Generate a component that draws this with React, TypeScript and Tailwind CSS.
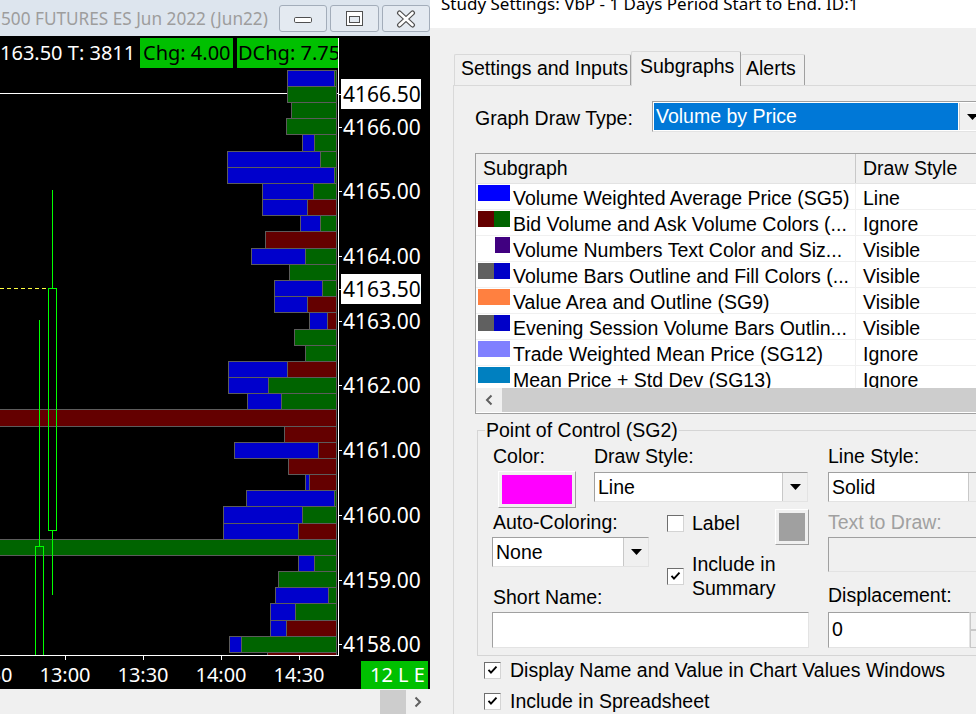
import React from 'react';

const B = '#0000cc', G = '#006400', R = '#640000';
type Seg = [number, number, string];
const rows: Seg[][] = [
  [[287, 334, B], [334, 336, G]],
  [[287, 336, G]],
  [[291, 336, G]],
  [[286, 336, G]],
  [[302, 314, B], [314, 336, G]],
  [[227, 320, B], [320, 336, G]],
  [[227, 334, B], [334, 336, G]],
  [[262, 313, B], [313, 336, G]],
  [[262, 307, B], [307, 336, R]],
  [[300, 320, B], [320, 336, G]],
  [[265, 336, R]],
  [[251, 305, B], [305, 336, G]],
  [[289, 336, G]],
  [[274, 322, B], [322, 336, G]],
  [[274, 307, B], [307, 336, R]],
  [[309, 327, B], [327, 336, R]],
  [[294, 336, G]],
  [[305, 336, G]],
  [[228, 287, B], [287, 336, R]],
  [[228, 268, B], [268, 336, G]],
  [[247, 281, B], [281, 336, G]],
  [[-2, 336, R]],
  [[284, 336, R]],
  [[234, 318, B], [318, 336, R]],
  [[288, 336, R]],
  [[305, 309, B], [309, 336, R]],
  [[246, 334, B], [334, 336, G]],
  [[223, 302, B], [302, 336, G]],
  [[223, 298, B], [298, 336, R]],
  [[-2, 336, G]],
  [[298, 314, B], [314, 336, G]],
  [[278, 336, G]],
  [[275, 328, B], [328, 336, G]],
  [[270, 295, B], [295, 336, G]],
  [[270, 286, B], [286, 336, R]],
  [[229, 241, B], [241, 336, G]],
  [[267, 336, R]],
];

const rowTop = (i: number) => Math.round(69.7 + i * 16.175);

const prices: [string, number, boolean][] = [
  ['4166.50', 94, true],
  ['4166.00', 127, false],
  ['4165.00', 191, false],
  ['4164.00', 256, false],
  ['4163.50', 289, true],
  ['4163.00', 321, false],
  ['4162.00', 385, false],
  ['4161.00', 450, false],
  ['4160.00', 515, false],
  ['4159.00', 580, false],
  ['4158.00', 644, false],
];

const times: [string, number][] = [
  ['12:30', -13],
  ['13:00', 65],
  ['13:30', 143],
  ['14:00', 221],
  ['14:30', 299],
];

function TitleBar() {
  return (
    <div className="h-[36px] bg-[#dde5ee] flex items-start shrink-0">
      <div className="w-[279px] pt-[8px] pl-[1px] text-[17.2px] leading-[22px] text-[#9d9d9d] whitespace-nowrap overflow-hidden">
        500 FUTURES ES Jun 2022 (Jun22)
      </div>
      <div className="flex gap-[3px] pt-[5px]">
        <div className="w-[48px] h-[27px] border border-[#a3adba] rounded-[3px] bg-[#e4eaf1] flex items-center justify-center">
          <svg width="20" height="8" viewBox="0 0 20 8" className="mt-[3px]">
            <rect x="1.5" y="1.5" width="17" height="5" rx="1.2" fill="#fff" stroke="#505050" strokeWidth="1" />
          </svg>
        </div>
        <div className="w-[49px] h-[27px] border border-[#a3adba] rounded-[3px] bg-[#e4eaf1] flex items-center justify-center">
          <svg width="18" height="16" viewBox="0 0 18 16">
            <rect x="0.5" y="0.5" width="16" height="14" fill="#fff" stroke="#505050" strokeWidth="1" />
            <rect x="3.5" y="5.5" width="10" height="6" fill="#e4eaf1" stroke="#505050" strokeWidth="1" />
          </svg>
        </div>
        <div className="w-[48px] h-[27px] border border-[#a3adba] rounded-[3px] bg-[#e4eaf1] flex items-center justify-center">
          <svg width="20" height="18" viewBox="0 0 20 18">
            <path d="M3.5 3 L16.5 15 M16.5 3 L3.5 15" stroke="#505050" strokeWidth="5" strokeLinecap="round" />
            <path d="M3.5 3 L16.5 15 M16.5 3 L3.5 15" stroke="#ffffff" strokeWidth="2.6" strokeLinecap="round" />
          </svg>
        </div>
      </div>
    </div>
  );
}

function Chart() {
  return (
    <svg width="430" height="621" viewBox="0 68 430 621" className="block bg-black shrink-0">
      <defs>
        <clipPath id="plot">
          <rect x="0" y="68" width="338" height="587" />
        </clipPath>
      </defs>
      <g clipPath="url(#plot)">
        <line x1="0" y1="93.5" x2="338" y2="93.5" stroke="#ffffff" strokeWidth="1" />
        <line x1="0" y1="288.5" x2="48" y2="288.5" stroke="#ffff40" strokeWidth="1" strokeDasharray="4 3" />
        {rows.map((segs, i) => {
          const t = rowTop(i);
          const h = rowTop(i + 1) - t;
          return segs.map(([a, b, c], j) => (
            <rect key={i + '-' + j} x={a + 0.5} y={t + 0.5} width={b - a} height={h} fill={c} stroke="#5c5c5c" strokeWidth="1" />
          ));
        })}
        <line x1="52.5" y1="190" x2="52.5" y2="288" stroke="#00ff00" strokeWidth="1" />
        <line x1="52.5" y1="530" x2="52.5" y2="595" stroke="#00ff00" strokeWidth="1" />
        <rect x="48.5" y="288.5" width="8" height="242" fill="none" stroke="#00ff00" strokeWidth="1" />
        <line x1="39.5" y1="320" x2="39.5" y2="546" stroke="#00ff00" strokeWidth="1" />
        <rect x="35.5" y="546.5" width="8" height="130" fill="none" stroke="#00ff00" strokeWidth="1" />
      </g>
      <line x1="338.5" y1="68" x2="338.5" y2="656" stroke="#ffffff" strokeWidth="1" />
      <line x1="0" y1="655.5" x2="339" y2="655.5" stroke="#ffffff" strokeWidth="1" />
      {prices.map(([, y]) => (
        <line key={'t' + y} x1="338" y1={y + 0.5} x2="342" y2={y + 0.5} stroke="#ffffff" strokeWidth="1" />
      ))}
      {times.map(([, x]) => (
        <line key={'tt' + x} x1={x + 0.5} y1="655" x2={x + 0.5} y2="660" stroke="#ffffff" strokeWidth="1" />
      ))}
      {prices.map(([p, y, boxed]) => (
        <g key={p}>
          {boxed && <rect x="341" y={y - 15} width="80" height="30" fill="#ffffff" />}
          <text x="343" y={y + 7.5} fontFamily="Noto Sans, sans-serif" fontSize="21" fill={boxed ? '#000000' : '#ffffff'}>
            {p}
          </text>
        </g>
      ))}
      {times.map(([t, x]) => (
        <text key={t} x={x} y="682" textAnchor="middle" fontFamily="Noto Sans, sans-serif" fontSize="20" fill="#ffffff">
          {t}
        </text>
      ))}
      <rect x="361" y="661" width="67" height="28" fill="#00c000" />
      <text x="370" y="682" fontFamily="Noto Sans, sans-serif" fontSize="20" fill="#ffffff">
        12 L E
      </text>
    </svg>
  );
}

function ChartWindow() {
  return (
    <div className="w-[430px] h-[714px] flex flex-col shrink-0 font-['Noto_Sans',sans-serif]">
      <TitleBar />
      <div className="h-[32px] bg-black pt-[2px] flex text-[20px] leading-[30px] whitespace-nowrap shrink-0">
        <div className="w-[140px] text-white overflow-hidden">163.50 T: 3811</div>
        <div className="w-[93px] bg-[#00c000] text-black pl-[3px] overflow-hidden">Chg: 4.00</div>
        <div className="w-[101px] ml-[4px] bg-[#00c000] text-black pl-[1px] overflow-hidden">DChg: 7.75</div>
        <div className="w-px bg-white" />
      </div>
      <Chart />
      <div className="h-[25px] bg-[#f0f0f0] flex shrink-0">
        <div className="flex-1" />
        <div className="w-[26px] mt-[1px] bg-[#cdcdcd]" />
        <div className="w-[24px] flex items-center justify-center">
          <svg width="8" height="12" viewBox="0 0 8 12">
            <path d="M1.5 1.5 L6 6 L1.5 10.5" fill="none" stroke="#606060" strokeWidth="2" />
          </svg>
        </div>
      </div>
    </div>
  );
}

const Tri = () => (
  <svg width="11" height="6" viewBox="0 0 11 6">
    <path d="M0 0 H11 L5.5 6 Z" fill="#000" />
  </svg>
);

const Check = () => (
  <svg width="11" height="10" viewBox="0 0 11 10">
    <path d="M1.5 4.8 L4 7.6 L9.5 1.6" fill="none" stroke="#000" strokeWidth="1.9" />
  </svg>
);

function CheckBox({ checked }: { checked?: boolean }) {
  return (
    <div className="w-[17px] h-[17px] shrink-0 bg-white border border-t-[#6e6e6e] border-l-[#6e6e6e] border-r-[#d4d4d4] border-b-[#d4d4d4] flex items-center justify-center">
      {checked && <Check />}
    </div>
  );
}

type Sub = { sw: [string, number][]; name: string; style: string };
const subs: Sub[] = [
  { sw: [['#0000ff', 32]], name: 'Volume Weighted Average Price (SG5)', style: 'Line' },
  { sw: [['#640000', 16], ['#006400', 16]], name: 'Bid Volume and Ask Volume Colors (...', style: 'Ignore' },
  { sw: [['transparent', 17], ['#400080', 15]], name: 'Volume Numbers Text Color and Siz...', style: 'Visible' },
  { sw: [['#606060', 16], ['#0000c8', 16]], name: 'Volume Bars Outline and Fill Colors (...', style: 'Visible' },
  { sw: [['#ff8040', 32]], name: 'Value Area and Outline (SG9)', style: 'Visible' },
  { sw: [['#606060', 16], ['#0000c8', 16]], name: 'Evening Session Volume Bars Outlin...', style: 'Visible' },
  { sw: [['#8080ff', 32]], name: 'Trade Weighted Mean Price (SG12)', style: 'Ignore' },
  { sw: [['#0080c0', 32]], name: 'Mean Price + Std Dev (SG13)', style: 'Ignore' },
];

function SubList() {
  return (
    <div className="mt-[21px] w-[540px] h-[261px] border border-[#a0a0a0] bg-white flex flex-col">
      <div className="h-[30px] shrink-0 flex bg-[#f0f0f0] border-b border-[#e3e3e3]">
        <div className="w-[380px] pl-[7px] leading-[29px] border-r border-[#c8c8c8]">Subgraph</div>
        <div className="pl-[7px] leading-[29px]">Draw Style</div>
      </div>
      <div className="h-[204px] shrink-0 overflow-hidden">
        {subs.map((s, i) => (
          <div key={i} className="h-[26px] flex border-b border-[#f0f0f0] overflow-hidden">
            <div className="w-[380px] flex items-start pl-[2px] border-r border-[#f0f0f0] whitespace-nowrap overflow-hidden">
              <div className="flex w-[32px] h-[16px] mt-[1px] shrink-0">
                {s.sw.map(([c, w], j) => (
                  <div key={j} className="h-[16px]" style={{ width: w, background: c }} />
                ))}
              </div>
              <div className="ml-[3px] leading-[25px] pt-[2px]">{s.name}</div>
            </div>
            <div className="pl-[7px] leading-[25px] pt-[2px] whitespace-nowrap">{s.style}</div>
          </div>
        ))}
      </div>
      <div className="h-[24px] shrink-0 flex">
        <div className="w-[26px] bg-[#f0f0f0] flex items-center justify-center">
          <svg width="8" height="12" viewBox="0 0 8 12">
            <path d="M6.5 1.5 L2 6 L6.5 10.5" fill="none" stroke="#606060" strokeWidth="2" />
          </svg>
        </div>
        <div className="flex-1 bg-[#cdcdcd]" />
      </div>
    </div>
  );
}

function PocGroup() {
  return (
    <div className="mt-[16px] ml-[2px] w-[560px] h-[226px] border-l border-t border-b border-[#d5d5d5]">
      <div className="-mt-[12px] ml-[7px] w-fit px-[1px] bg-[#f0f0f0] leading-[22px]">Point of Control (SG2)</div>
      <div className="pt-[4px] pl-[14px] flex">
        <div className="w-[317px] flex flex-col">
          <div className="flex h-[63px]">
            <div className="w-[102px] flex flex-col">
              <div className="h-[22px] leading-[22px] pl-[1px]">Color:</div>
              <div className="ml-[6px] mt-[4px] w-[78px] h-[37px] bg-[#f0f0f0] border border-t-white border-l-white border-r-[#a0a0a0] border-b-[#a0a0a0] p-[3px]">
                <div className="w-full h-full bg-[#ff00ff]" />
              </div>
            </div>
            <div className="flex flex-col">
              <div className="h-[22px] leading-[22px]">Draw Style:</div>
              <div className="mt-[5px] w-[214px] h-[30px] flex bg-white border border-t-[#a0a0a0] border-l-[#a0a0a0] border-r-[#e3e3e3] border-b-[#e3e3e3]">
                <div className="flex-1 pl-[3px] leading-[28px]">Line</div>
                <div className="w-[25px] bg-[#f0f0f0] border-l border-[#c8c8c8] flex items-center justify-center">
                  <Tri />
                </div>
              </div>
            </div>
          </div>
          <div className="flex h-[78px]">
            <div className="w-[175px] flex flex-col">
              <div className="mt-[3px] h-[22px] leading-[22px] pl-[1px]">Auto-Coloring:</div>
              <div className="mt-[4px] w-[157px] h-[30px] flex bg-white border border-t-[#a0a0a0] border-l-[#a0a0a0] border-r-[#e3e3e3] border-b-[#e3e3e3]">
                <div className="flex-1 pl-[3px] leading-[28px]">None</div>
                <div className="w-[25px] bg-[#f0f0f0] border-l border-[#c8c8c8] flex items-center justify-center">
                  <Tri />
                </div>
              </div>
            </div>
            <div className="w-[108px] flex flex-col">
              <div className="mt-[4px] h-[22px] flex items-center gap-[8px]">
                <CheckBox />
                <span className="leading-[22px]">Label</span>
              </div>
              <div className="mt-[18px] flex items-center gap-[8px]">
                <CheckBox checked />
                <span className="leading-[24px] whitespace-nowrap">
                  Include in
                  <br />
                  Summary
                </span>
              </div>
            </div>
            <div className="mt-[1px] w-[34px] h-[36px] bg-[#f0f0f0] border border-t-white border-l-white border-r-[#a0a0a0] border-b-[#a0a0a0] p-[3px]">
              <div className="w-full h-full bg-[#a0a0a0]" />
            </div>
          </div>
          <div className="h-[22px] leading-[22px] pl-[1px]">Short Name:</div>
          <div className="mt-[4px] w-[317px] h-[36px] bg-white border border-t-[#a0a0a0] border-l-[#a0a0a0] border-r-[#e3e3e3] border-b-[#e3e3e3]" />
        </div>
        <div className="ml-[19px] flex flex-col">
          <div className="h-[22px] leading-[22px]">Line Style:</div>
          <div className="mt-[5px] w-[166px] h-[30px] flex bg-white border border-t-[#a0a0a0] border-l-[#a0a0a0] border-r-[#e3e3e3] border-b-[#e3e3e3]">
            <div className="flex-1 pl-[3px] leading-[28px]">Solid</div>
            <div className="w-[25px] bg-[#f0f0f0] border-l border-[#c8c8c8] flex items-center justify-center">
              <Tri />
            </div>
          </div>
          <div className="mt-[9px] h-[22px] leading-[22px] text-[#a0a0a0]">Text to Draw:</div>
          <div className="mt-[4px] w-[166px] h-[35px] bg-[#f0f0f0] border border-t-[#a0a0a0] border-l-[#a0a0a0] border-r-[#e3e3e3] border-b-[#e3e3e3]" />
          <div className="mt-[12px] h-[22px] leading-[22px]">Displacement:</div>
          <div className="mt-[6px] flex h-[36px]">
            <div className="w-[142px] h-[36px] bg-white border border-t-[#a0a0a0] border-l-[#a0a0a0] border-r-[#e3e3e3] border-b-[#e3e3e3] pl-[3px] leading-[33px]">
              0
            </div>
            <div className="w-[18px] flex flex-col">
              <div className="flex-1 bg-[#f0f0f0] border border-[#c8c8c8]" />
              <div className="flex-1 bg-[#f0f0f0] border border-[#c8c8c8]" />
            </div>
          </div>
        </div>
      </div>
    </div>
  );
}

function Dialog() {
  return (
    <div className="w-[546px] h-[714px] shrink-0 bg-[#f0f0f0] overflow-hidden font-['Liberation_Sans',Arial,sans-serif] text-[19.5px] text-black">
      <div className="h-[28px] bg-white overflow-hidden pl-[11px]">
        <div className="-mt-[6px] leading-[20px] text-[17px] font-['Noto_Sans',sans-serif] whitespace-nowrap">
          Study Settings: VbP - 1 Days Period Start to End. ID:1
        </div>
      </div>
      <div className="h-[57px] pl-[24px] flex items-end relative z-10">
        <div className="w-[177px] h-[31px] bg-[#f0f0f0] border-t border-l border-r border-t-[#d9d9d9] border-l-[#d9d9d9] border-r-[#a0a0a0] rounded-t-[2px] pl-[6px] leading-[26px] whitespace-nowrap">
          Settings and Inputs
        </div>
        <div className="w-[110px] h-[35px] -mb-px bg-[#f0f0f0] border-t border-l border-r border-t-[#d9d9d9] border-l-[#d9d9d9] border-r-[#a0a0a0] rounded-t-[2px] pl-[8px] leading-[28px] whitespace-nowrap">
          Subgraphs
        </div>
        <div className="w-[64px] h-[31px] bg-[#f0f0f0] border-t border-r border-t-[#d9d9d9] border-r-[#a0a0a0] rounded-t-[2px] pl-[5px] leading-[26px] whitespace-nowrap">
          Alerts
        </div>
      </div>
      <div className="ml-[23px] w-[600px] h-[629px] border-l border-t border-[#d9d9d9] pl-[21px] pt-[15px]">
        <div className="flex h-[31px] items-center">
          <div className="w-[177px] leading-[31px] pt-[3px] whitespace-nowrap">Graph Draw Type:</div>
          <div className="w-[340px] h-[31px] bg-white border border-t-[#a0a0a0] border-l-[#a0a0a0] border-r-[#e3e3e3] border-b-[#e3e3e3] p-[1px] flex">
            <div className="w-[304px] bg-[#0078d7] text-white pl-[2px] leading-[27px] whitespace-nowrap">Volume by Price</div>
            <div className="w-[26px] ml-[1px] bg-[#f0f0f0] border-l border-[#c8c8c8] flex items-center justify-center">
              <Tri />
            </div>
          </div>
        </div>
        <SubList />
        <PocGroup />
        <div className="mt-[2px] ml-[9px] h-[24px] flex items-center gap-[9px] whitespace-nowrap">
          <CheckBox checked />
          <span className="leading-[24px]">Display Name and Value in Chart Values Windows</span>
        </div>
        <div className="mt-[7px] ml-[9px] h-[24px] flex items-center gap-[9px] whitespace-nowrap">
          <CheckBox checked />
          <span className="leading-[24px]">Include in Spreadsheet</span>
        </div>
      </div>
    </div>
  );
}

export default function App() {
  return (
    <div className="w-[976px] h-[714px] flex overflow-hidden bg-[#f0f0f0]">
      <ChartWindow />
      <Dialog />
    </div>
  );
}
